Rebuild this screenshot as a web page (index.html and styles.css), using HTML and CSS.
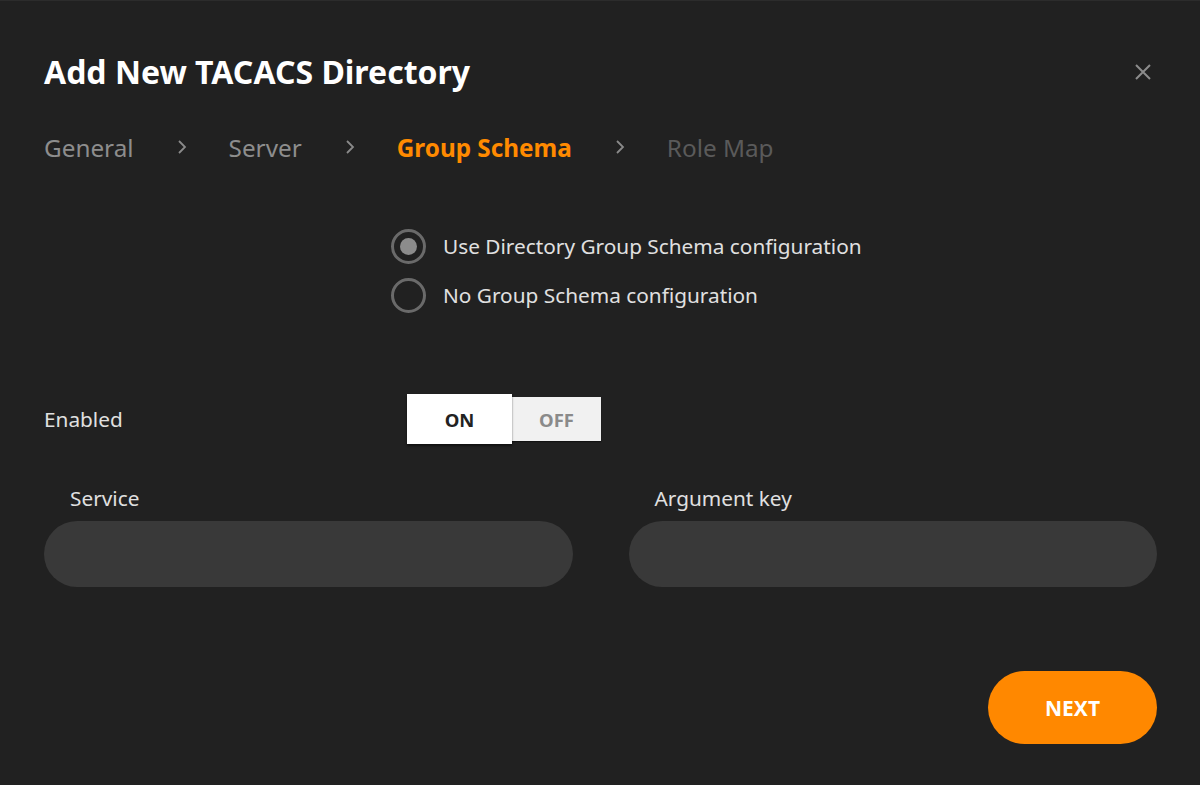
FILE: index.html
```html
<!DOCTYPE html>
<html lang="en">
<head>
    <meta charset="UTF-8">
    <title>Add New TACACS Directory</title>
    <link rel="stylesheet" href="styles.css">
</head>
<body>
    <div class="dialog">
        <div class="dialog-header">
            <h1>Add New TACACS Directory</h1>
            <button class="close" aria-label="Close">
                <svg width="18" height="18" viewBox="0 0 18 18"><path d="M2 2 L16 16 M16 2 L2 16" stroke="#8c8c8c" stroke-width="2" fill="none"/></svg>
            </button>
        </div>

        <div class="steps">
            <span class="step done">General</span>
            <span class="chev"><svg width="10" height="16" viewBox="0 0 10 16"><path d="M2 2 L8 8 L2 14" stroke="#8a8a8a" stroke-width="1.8" fill="none"/></svg></span>
            <span class="step done">Server</span>
            <span class="chev"><svg width="10" height="16" viewBox="0 0 10 16"><path d="M2 2 L8 8 L2 14" stroke="#8a8a8a" stroke-width="1.8" fill="none"/></svg></span>
            <span class="step active">Group Schema</span>
            <span class="chev"><svg width="10" height="16" viewBox="0 0 10 16"><path d="M2 2 L8 8 L2 14" stroke="#8a8a8a" stroke-width="1.8" fill="none"/></svg></span>
            <span class="step todo">Role Map</span>
        </div>

        <div class="radios">
            <label class="radio checked"><span class="dot"></span>Use Directory Group Schema configuration</label>
            <label class="radio"><span class="dot"></span>No Group Schema configuration</label>
        </div>

        <div class="enabled-row">
            <span class="label">Enabled</span>
            <div class="switch">
                <span class="opt on">ON</span>
                <span class="opt off">OFF</span>
            </div>
        </div>

        <div class="fields">
            <div class="field">
                <label>Service</label>
                <input type="text">
            </div>
            <div class="field">
                <label>Argument key</label>
                <input type="text">
            </div>
        </div>

        <div class="actions">
            <button class="next">NEXT</button>
        </div>
    </div>
</body>
</html>
```

FILE: styles.css
```css
* {
    box-sizing: border-box;
    margin: 0;
    padding: 0;
}
body {
    background: #212121;
    font-family: "Noto Sans", "Open Sans", sans-serif;
    color: #e2e2e2;
    width: 1200px;
    height: 785px;
    overflow: hidden;
}
.dialog {
    height: 785px;
    padding: 0 43px 0 44px;
    border-top: 1px solid #2c2c2c;
}
.dialog-header {
    display: flex;
    justify-content: space-between;
    align-items: center;
    padding-top: 48px;
    height: 93px;
}
.dialog-header h1 {
    font-size: 32px;
    font-weight: 700;
    color: #fff;
    line-height: 42px;
}
.close {
    background: none;
    border: none;
    width: 18px;
    height: 18px;
    margin-right: 5px;
}
.steps {
    display: flex;
    align-items: center;
    margin-top: 32px;
    height: 42px;
    font-size: 24.3px;
}
.step.done { color: #8d8d8d; }
.step.active { color: #ff8a00; font-weight: 700; }
.step.todo { color: #5a5a5a; }
.chev {
    display: flex;
    margin: 0 42px 0 43px;
}
.radios {
    display: flex;
    flex-direction: column;
    gap: 15px;
    margin-top: 61px;
    margin-left: 347px;
}
.radio {
    display: flex;
    align-items: center;
    gap: 17px;
    font-size: 20.8px;
    color: #e0e0e0;
    height: 34px;
}
.radio .dot {
    width: 35px;
    height: 35px;
    border: 3px solid #6a6a6a;
    border-radius: 50%;
    display: flex;
    align-items: center;
    justify-content: center;
}
.radio.checked .dot::after {
    content: "";
    width: 17px;
    height: 17px;
    border-radius: 50%;
    background: #8c8c8c;
}
.enabled-row {
    display: flex;
    align-items: center;
    margin-top: 82px;
    height: 50px;
}
.enabled-row .label {
    font-size: 20.8px;
    width: 363px;
    color: #e0e0e0;
}
.switch {
    display: flex;
    align-items: center;
}
.opt {
    display: flex;
    align-items: center;
    justify-content: center;
    font-size: 18.5px;
    font-weight: 700;
}
.opt.on {
    width: 105px;
    height: 50px;
    background: #fff;
    color: #222;
    box-shadow: 0 2px 2px rgba(0, 0, 0, 0.5);
    position: relative;
    z-index: 1;
}
.opt.off {
    width: 89px;
    height: 44px;
    background: #f1f1f1;
    color: #8a8a8a;
    box-shadow: 0 1px 1px rgba(0, 0, 0, 0.4);
}
.fields {
    display: flex;
    gap: 56px;
    margin-top: 40px;
}
.field {
    flex: 1;
}
.field label {
    display: block;
    font-size: 20.8px;
    color: #e0e0e0;
    padding-left: 26px;
    height: 28px;
    line-height: 28px;
    margin-bottom: 9px;
}
.field input {
    width: 100%;
    height: 66px;
    border: none;
    border-radius: 33px;
    background: #393939;
    outline: none;
}
.actions {
    display: flex;
    justify-content: flex-end;
    margin-top: 84px;
}
.next {
    width: 169px;
    height: 73px;
    border: none;
    border-radius: 37px;
    background: #ff8800;
    color: #fff;
    font-family: "Noto Sans", sans-serif;
    font-size: 21px;
    font-weight: 700;
}
```
